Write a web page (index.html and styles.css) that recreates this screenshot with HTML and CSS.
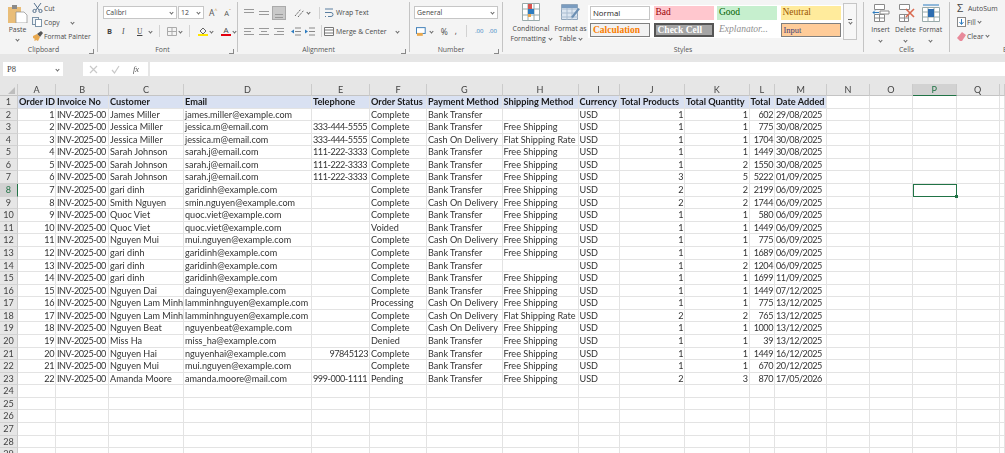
FILE: index.html
```html
<!DOCTYPE html>
<html lang="en">
<head>
    <meta charset="UTF-8">
    <title>Orders - Excel</title>
    <link rel="stylesheet" href="styles.css">
</head>
<body>
<div class="app">

    <!-- ribbon -->
    <div class="ribbon">
        <div class="group clipboard">
            <div class="group-body">
                <div class="big-btn paste">
                    <svg width="20" height="18" viewBox="0 0 20 18"><rect x="0" y="2" width="13" height="16" fill="#e9bd78"/><rect x="4" y="0" width="5" height="4" fill="#8a8a8a"/><path d="M8 7h8l3 3v8H8z" fill="#fff" stroke="#8a8a8a" stroke-width=".7"/></svg>
                    <span>Paste</span>
                    <i class="arr"></i>
                </div>
                <div class="small-col">
                    <div class="small-btn"><svg width="11" height="10" viewBox="0 0 11 10"><path d="M2 0l5 7M9 0L4 7" stroke="#55708c" fill="none"/><circle cx="2.5" cy="8" r="1.6" fill="none" stroke="#55708c"/><circle cx="8.5" cy="8" r="1.6" fill="none" stroke="#55708c"/></svg><span>Cut</span></div>
                    <div class="small-btn"><svg width="11" height="10" viewBox="0 0 11 10"><rect x=".5" y=".5" width="6" height="7" fill="#eef2f6" stroke="#7c93a8"/><rect x="3.5" y="2.5" width="6" height="7" fill="#fff" stroke="#7c93a8"/></svg><span>Copy</span><i class="arr copy-arr"></i></div>
                    <div class="small-btn"><svg width="11" height="10" viewBox="0 0 11 10"><path d="M5 3l4-3 2 2-3 4z" fill="#555"/><path d="M1 5l4-2 3 3-2 4-2-1-1 1-1-1 1-1-2-1z" fill="#e9a94f"/></svg><span>Format Painter</span></div>
                </div>
            </div>
            <div class="group-label">Clipboard<i class="launcher"></i></div>
        </div>

        <div class="group font">
            <div class="group-body rows">
                <div class="row">
                    <div class="select font-name">Calibri<i class="arr"></i></div>
                    <div class="select font-size">12<i class="arr"></i></div>
                    <span class="grow-a">A<sup>^</sup></span>
                    <span class="shrink-a">A<sup>ˇ</sup></span>
                </div>
                <div class="row fmt-row">
                    <b class="fmt fmt-b">B</b><em class="fmt">I</em><u class="fmt fmt-u">U</u><i class="arr"></i>
                    <i class="vsep"></i>
                    <svg width="10" height="9" viewBox="0 0 10 9"><path d="M.5.5h9v8h-9zM5 0v9M0 4.5h10" fill="none" stroke="#aaa"/></svg><i class="arr"></i>
                    <i class="vsep"></i>
                    <span class="color-btn"><svg width="9" height="7" viewBox="0 0 9 7"><path d="M1 4l3-3 3 3-3 3z" fill="none" stroke="#666"/></svg><i class="bar yellow"></i></span><i class="arr"></i>
                    <span class="color-btn text-a">A<i class="bar red"></i></span><i class="arr"></i>
                </div>
            </div>
            <div class="group-label">Font<i class="launcher"></i></div>
        </div>

        <div class="group alignment">
            <div class="group-body rows">
                <div class="row">
                    <span class="lines top"><i></i><i></i></span>
                    <span class="lines middle"><i></i><i></i></span>
                    <span class="lines bottom active"><i></i><i></i></span>
                    <svg class="orient" width="11" height="10" viewBox="0 0 11 10"><path d="M1 8l6-7M4 9l6-7" stroke="#666" stroke-dasharray="2 1" fill="none"/></svg><i class="arr"></i>
                    <i class="vsep"></i>
                    <svg class="wrap-ico" width="10" height="10" viewBox="0 0 10 10"><path d="M1 1h8M1 4.500h6a2 2 0 0 1 0 4H4M1 8.500h1" stroke="#5b7fa0" fill="none"/></svg>
                    <span class="cmd">Wrap Text</span>
                </div>
                <div class="row">
                    <span class="lines h-left"><i></i><i></i><i></i></span>
                    <span class="lines h-center"><i></i><i></i><i></i></span>
                    <span class="lines h-right"><i></i><i></i><i></i></span>
                    <svg class="indent" width="10" height="9" viewBox="0 0 10 9"><path d="M4 1h6M4 4.500h6M4 8h6" stroke="#888"/><path d="M3 2.500L0 4.500l3 2z" fill="#2d7cc0"/></svg>
                    <svg class="indent" width="10" height="9" viewBox="0 0 10 9"><path d="M4 1h6M4 4.500h6M4 8h6" stroke="#888"/><path d="M0 2.500l3 2-3 2z" fill="#2d7cc0"/></svg>
                    <i class="vsep"></i>
                    <svg class="wrap-ico" width="10" height="9" viewBox="0 0 10 9"><path d="M.5.500h9v8h-9zM0 3h10M0 6h10" fill="#fff" stroke="#777"/></svg>
                    <span class="cmd">Merge &amp; Center</span><i class="arr merge-arr"></i>
                </div>
            </div>
            <div class="group-label">Alignment<i class="launcher"></i></div>
        </div>

        <div class="group number">
            <div class="group-body rows">
                <div class="row">
                    <div class="select number-format">General<i class="arr"></i></div>
                </div>
                <div class="row num-row">
                    <svg width="10" height="9" viewBox="0 0 10 9"><rect x=".5" y=".5" width="9" height="6" fill="#fff" stroke="#3f7fb8"/><rect x="1" y="6" width="6" height="3" fill="#e9a94f"/></svg><i class="arr"></i>
                    <span class="pct">%</span>
                    <span class="comma">,</span>
                    <i class="vsep"></i>
                    <span class="dec">.00</span>
                    <span class="dec">.00</span>
                </div>
            </div>
            <div class="group-label">Number<i class="launcher"></i></div>
        </div>

        <div class="group styles-group">
            <div class="group-body">
                <div class="big-btn cond">
                    <svg width="18" height="18" viewBox="0 0 18 18"><path d="M.5.500h17v17H.5zM6 0v18M12 0v18M0 6h18M0 12h18" fill="#fff" stroke="#9aa"/><rect x="6" y="1" width="4" height="5" fill="#d9534f"/><rect x="6" y="6" width="6" height="5" fill="#2d7cc0"/><rect x="6" y="11" width="3" height="3" fill="#e9a94f"/></svg>
                    <span>Conditional<br>Formatting <i class="arr inline"></i></span>
                </div>
                <div class="big-btn as-table">
                    <svg width="19" height="18" viewBox="0 0 19 18"><path d="M.5 1.500h16v15H.5z" fill="#dce6f1" stroke="#8fa5bb"/><path d="M0 6h17M0 10h17M0 14h17M6 2v15M11 2v15" stroke="#a9bcd0"/><rect x="1" y="2" width="15" height="3" fill="#7a9cc0"/><path d="M10 14l7-9 2 1-7 9z" fill="#6b8fb3"/></svg>
                    <span>Format as<br>Table <i class="arr inline"></i></span>
                </div>
                <div class="gallery">
                    <div class="style-grid">
                        <div class="style s-normal">Normal</div>
                        <div class="style s-bad">Bad</div>
                        <div class="style s-good">Good</div>
                        <div class="style s-neutral">Neutral</div>
                        <div class="style s-calc">Calculation</div>
                        <div class="style s-check">Check Cell</div>
                        <div class="style s-expl">Explanator...</div>
                        <div class="style s-input">Input</div>
                    </div>
                    <div class="gallery-more"><i></i><i class="arr"></i></div>
                </div>
            </div>
            <div class="group-label">Styles</div>
        </div>

        <div class="group cells">
            <div class="group-body">
                <div class="cell-btn">
                    <svg width="18" height="18" viewBox="0 0 18 18"><path d="M2.500.500h10v5h-10zM2.500 10.500h10v7h-10zM7.500 10v8M2 14h11M8 7h9v3H8z" fill="#fff" stroke="#8a8a8a"/><path d="M7 8.500H1M3 6.500l-2 2 2 2" fill="none" stroke="#2d7cc0"/></svg>
                    <span>Insert</span><i class="arr"></i>
                </div>
                <div class="cell-btn">
                    <svg width="18" height="18" viewBox="0 0 18 18"><path d="M2.500.500h10v5h-10zM2.500 10.500h9v7h-9zM7.500 10v8M2 14h10" fill="#fff" stroke="#8a8a8a"/><path d="M9 5l8 8M17 5l-8 8" stroke="#d9694f" stroke-width="1.600"/></svg>
                    <span>Delete</span><i class="arr"></i>
                </div>
                <div class="cell-btn">
                    <svg width="18" height="18" viewBox="0 0 18 18"><path d="M.5 3.500h17v14H.5zM6 3v15M12 3v15M0 8h18M0 13h18" fill="#fff" stroke="#9aa"/><rect x="6" y="5" width="6" height="8" fill="#2d6db0"/><path d="M1 1h16" stroke="#2d7cc0"/></svg>
                    <span>Format</span><i class="arr"></i>
                </div>
            </div>
            <div class="group-label">Cells</div>
        </div>

        <div class="group editing">
            <div class="group-body">
                <div class="small-col">
                    <div class="small-btn"><span class="sigma">Σ</span><span>AutoSum</span></div>
                    <div class="small-btn"><svg width="9" height="10" viewBox="0 0 9 10"><rect x=".5" y=".5" width="8" height="9" fill="#fff" stroke="#888"/><path d="M4.500 2v5M2.500 5l2 2.500 2-2.500" stroke="#2d7cc0" fill="none"/></svg><span>Fill</span><i class="arr inline"></i></div>
                    <div class="small-btn"><svg width="9" height="9" viewBox="0 0 9 9"><path d="M0 6l5-6 4 3-4 6H3z" fill="#e88a9a"/></svg><span>Clear</span><i class="arr inline"></i></div>
                </div>
            </div>
            <div class="group-label">Editing</div>
        </div>
    </div>

    <!-- formula bar -->
    <div class="formula-bar">
        <div class="name-box">P8<i class="arr"></i></div>
        <div class="grip"></div>
        <div class="fx-box">
            <svg width="9" height="9" viewBox="0 0 9 9"><path d="M1 1l7 7M8 1L1 8" stroke="#c9c9c9" stroke-width="1.200"/></svg>
            <svg width="9" height="9" viewBox="0 0 9 9"><path d="M1 5l2.500 3L8 1" stroke="#c9c9c9" stroke-width="1.200" fill="none"/></svg>
            <em>fx</em>
        </div>
        <div class="formula-input"></div>
    </div>

    <!-- sheet -->
    <div class="sheet">
        <span class="corner"><i></i></span><span class="col">A</span><span class="col">B</span><span class="col">C</span><span class="col">D</span><span class="col">E</span><span class="col">F</span><span class="col">G</span><span class="col">H</span><span class="col">I</span><span class="col">J</span><span class="col">K</span><span class="col">L</span><span class="col">M</span><span class="col">N</span><span class="col">O</span><span class="col col-on">P</span><span class="col">Q</span><span class="col"></span>

        <span class="rowh">1</span><span class="hd">Order ID</span><span class="hd">Invoice No</span><span class="hd">Customer</span><span class="hd">Email</span><span class="hd">Telephone</span><span class="hd">Order Status</span><span class="hd">Payment Method</span><span class="hd">Shipping Method</span><span class="hd">Currency</span><span class="hd">Total Products</span><span class="hd">Total Quantity</span><span class="hd">Total</span><span class="hd">Date Added</span><span></span><span></span><span></span><span></span><span></span>

        <span class="rowh">2</span><span class="n">1</span><span>INV-2025-00</span><span>James Miller</span><span>james.miller@example.com</span><span></span><span>Complete</span><span>Bank Transfer</span><span></span><span>USD</span><span class="n">1</span><span class="n">1</span><span class="n">602</span><span>29/08/2025</span><span></span><span></span><span></span><span></span><span></span>
        <span class="rowh">3</span><span class="n">2</span><span>INV-2025-00</span><span>Jessica Miller</span><span>jessica.m@email.com</span><span>333-444-5555</span><span>Complete</span><span>Bank Transfer</span><span>Free Shipping</span><span>USD</span><span class="n">1</span><span class="n">1</span><span class="n">775</span><span>30/08/2025</span><span></span><span></span><span></span><span></span><span></span>
        <span class="rowh">4</span><span class="n">3</span><span>INV-2025-00</span><span>Jessica Miller</span><span>jessica.m@email.com</span><span>333-444-5555</span><span>Complete</span><span>Cash On Delivery</span><span>Flat Shipping Rate</span><span>USD</span><span class="n">1</span><span class="n">1</span><span class="n">1704</span><span>30/08/2025</span><span></span><span></span><span></span><span></span><span></span>
        <span class="rowh">5</span><span class="n">4</span><span>INV-2025-00</span><span>Sarah Johnson</span><span>sarah.j@email.com</span><span>111-222-3333</span><span>Complete</span><span>Bank Transfer</span><span>Free Shipping</span><span>USD</span><span class="n">1</span><span class="n">1</span><span class="n">1449</span><span>30/08/2025</span><span></span><span></span><span></span><span></span><span></span>
        <span class="rowh">6</span><span class="n">5</span><span>INV-2025-00</span><span>Sarah Johnson</span><span>sarah.j@email.com</span><span>111-222-3333</span><span>Complete</span><span>Bank Transfer</span><span>Free Shipping</span><span>USD</span><span class="n">1</span><span class="n">2</span><span class="n">1550</span><span>30/08/2025</span><span></span><span></span><span></span><span></span><span></span>
        <span class="rowh">7</span><span class="n">6</span><span>INV-2025-00</span><span>Sarah Johnson</span><span>sarah.j@email.com</span><span>111-222-3333</span><span>Complete</span><span>Bank Transfer</span><span>Free Shipping</span><span>USD</span><span class="n">3</span><span class="n">5</span><span class="n">5222</span><span>01/09/2025</span><span></span><span></span><span></span><span></span><span></span>
        <span class="rowh row-on">8</span><span class="n">7</span><span>INV-2025-00</span><span>gari dinh</span><span>garidinh@example.com</span><span></span><span>Complete</span><span>Bank Transfer</span><span>Free Shipping</span><span>USD</span><span class="n">2</span><span class="n">2</span><span class="n">2199</span><span>06/09/2025</span><span></span><span></span><span class="selected"></span><span></span><span></span>
        <span class="rowh">9</span><span class="n">8</span><span>INV-2025-00</span><span>Smith Nguyen</span><span>smin.nguyen@example.com</span><span></span><span>Complete</span><span>Cash On Delivery</span><span>Free Shipping</span><span>USD</span><span class="n">2</span><span class="n">2</span><span class="n">1744</span><span>06/09/2025</span><span></span><span></span><span></span><span></span><span></span>
        <span class="rowh">10</span><span class="n">9</span><span>INV-2025-00</span><span>Quoc Viet</span><span>quoc.viet@example.com</span><span></span><span>Complete</span><span>Bank Transfer</span><span>Free Shipping</span><span>USD</span><span class="n">1</span><span class="n">1</span><span class="n">580</span><span>06/09/2025</span><span></span><span></span><span></span><span></span><span></span>
        <span class="rowh">11</span><span class="n">10</span><span>INV-2025-00</span><span>Quoc Viet</span><span>quoc.viet@example.com</span><span></span><span>Voided</span><span>Bank Transfer</span><span>Free Shipping</span><span>USD</span><span class="n">1</span><span class="n">1</span><span class="n">1449</span><span>06/09/2025</span><span></span><span></span><span></span><span></span><span></span>
        <span class="rowh">12</span><span class="n">11</span><span>INV-2025-00</span><span>Nguyen Mui</span><span>mui.nguyen@example.com</span><span></span><span>Complete</span><span>Cash On Delivery</span><span>Free Shipping</span><span>USD</span><span class="n">1</span><span class="n">1</span><span class="n">775</span><span>06/09/2025</span><span></span><span></span><span></span><span></span><span></span>
        <span class="rowh">13</span><span class="n">12</span><span>INV-2025-00</span><span>gari dinh</span><span>garidinh@example.com</span><span></span><span>Complete</span><span>Bank Transfer</span><span>Free Shipping</span><span>USD</span><span class="n">1</span><span class="n">1</span><span class="n">1689</span><span>06/09/2025</span><span></span><span></span><span></span><span></span><span></span>
        <span class="rowh">14</span><span class="n">13</span><span>INV-2025-00</span><span>gari dinh</span><span>garidinh@example.com</span><span></span><span>Complete</span><span>Bank Transfer</span><span></span><span>USD</span><span class="n">1</span><span class="n">2</span><span class="n">1204</span><span>06/09/2025</span><span></span><span></span><span></span><span></span><span></span>
        <span class="rowh">15</span><span class="n">14</span><span>INV-2025-00</span><span>gari dinh</span><span>garidinh@example.com</span><span></span><span>Complete</span><span>Bank Transfer</span><span>Free Shipping</span><span>USD</span><span class="n">1</span><span class="n">1</span><span class="n">1699</span><span>11/09/2025</span><span></span><span></span><span></span><span></span><span></span>
        <span class="rowh">16</span><span class="n">15</span><span>INV-2025-00</span><span>Nguyen Dai</span><span>dainguyen@example.com</span><span></span><span>Complete</span><span>Bank Transfer</span><span>Free Shipping</span><span>USD</span><span class="n">1</span><span class="n">1</span><span class="n">1449</span><span>07/12/2025</span><span></span><span></span><span></span><span></span><span></span>
        <span class="rowh">17</span><span class="n">16</span><span>INV-2025-00</span><span>Nguyen Lam Minh</span><span>lamminhnguyen@example.com</span><span></span><span>Processing</span><span>Cash On Delivery</span><span>Free Shipping</span><span>USD</span><span class="n">1</span><span class="n">1</span><span class="n">775</span><span>13/12/2025</span><span></span><span></span><span></span><span></span><span></span>
        <span class="rowh">18</span><span class="n">17</span><span>INV-2025-00</span><span>Nguyen Lam Minh</span><span>lamminhnguyen@example.com</span><span></span><span>Complete</span><span>Cash On Delivery</span><span>Flat Shipping Rate</span><span>USD</span><span class="n">2</span><span class="n">2</span><span class="n">765</span><span>13/12/2025</span><span></span><span></span><span></span><span></span><span></span>
        <span class="rowh">19</span><span class="n">18</span><span>INV-2025-00</span><span>Nguyen Beat</span><span>nguyenbeat@example.com</span><span></span><span>Complete</span><span>Cash On Delivery</span><span>Free Shipping</span><span>USD</span><span class="n">1</span><span class="n">1</span><span class="n">1000</span><span>13/12/2025</span><span></span><span></span><span></span><span></span><span></span>
        <span class="rowh">20</span><span class="n">19</span><span>INV-2025-00</span><span>Miss Ha</span><span>miss_ha@example.com</span><span></span><span>Denied</span><span>Bank Transfer</span><span>Free Shipping</span><span>USD</span><span class="n">1</span><span class="n">1</span><span class="n">39</span><span>13/12/2025</span><span></span><span></span><span></span><span></span><span></span>
        <span class="rowh">21</span><span class="n">20</span><span>INV-2025-00</span><span>Nguyen Hai</span><span>nguyenhai@example.com</span><span class="n">97845123</span><span>Complete</span><span>Bank Transfer</span><span>Free Shipping</span><span>USD</span><span class="n">1</span><span class="n">1</span><span class="n">1449</span><span>16/12/2025</span><span></span><span></span><span></span><span></span><span></span>
        <span class="rowh">22</span><span class="n">21</span><span>INV-2025-00</span><span>Nguyen Mui</span><span>mui.nguyen@example.com</span><span></span><span>Complete</span><span>Bank Transfer</span><span>Free Shipping</span><span>USD</span><span class="n">1</span><span class="n">1</span><span class="n">670</span><span>20/12/2025</span><span></span><span></span><span></span><span></span><span></span>
        <span class="rowh">23</span><span class="n">22</span><span>INV-2025-00</span><span>Amanda Moore</span><span>amanda.moore@mail.com</span><span>999-000-1111</span><span>Pending</span><span>Bank Transfer</span><span>Free Shipping</span><span>USD</span><span class="n">2</span><span class="n">3</span><span class="n">870</span><span>17/05/2026</span><span></span><span></span><span></span><span></span><span></span>

        <span class="rowh">24</span><span></span><span></span><span></span><span></span><span></span><span></span><span></span><span></span><span></span><span></span><span></span><span></span><span></span><span></span><span></span><span></span><span></span><span></span>
        <span class="rowh">25</span><span></span><span></span><span></span><span></span><span></span><span></span><span></span><span></span><span></span><span></span><span></span><span></span><span></span><span></span><span></span><span></span><span></span><span></span>
        <span class="rowh">26</span><span></span><span></span><span></span><span></span><span></span><span></span><span></span><span></span><span></span><span></span><span></span><span></span><span></span><span></span><span></span><span></span><span></span><span></span>
        <span class="rowh">27</span><span></span><span></span><span></span><span></span><span></span><span></span><span></span><span></span><span></span><span></span><span></span><span></span><span></span><span></span><span></span><span></span><span></span><span></span>
        <span class="rowh">28</span><span></span><span></span><span></span><span></span><span></span><span></span><span></span><span></span><span></span><span></span><span></span><span></span><span></span><span></span><span></span><span></span><span></span><span></span>
        <span class="rowh">29</span><span></span><span></span><span></span><span></span><span></span><span></span><span></span><span></span><span></span><span></span><span></span><span></span><span></span><span></span><span></span><span></span><span></span><span></span>
    </div>
</div>
</body>
</html>
```

FILE: styles.css
```css
html, body {
    margin: 0;
    height: 453px;
    overflow: hidden;
    background: #fff;
}
.app {
    width: 1005px;
    height: 453px;
    overflow: hidden;
    font-family: "Open Sans", "Noto Sans", sans-serif;
    font-size: 6.9px;
    color: #4a4a4a;
    filter: blur(0.4px);
}
i { font-style: normal; }

/* ---- ribbon ---- */
.ribbon {
    display: flex;
    height: 54px;
    background: #f4f4f4;
    width: 1140px;
    box-sizing: border-box;
    padding-top: 2px;
}
.group {
    position: relative;
    display: flex;
    flex-direction: column;
    height: 50px;
    box-sizing: border-box;
    border-right: 1px solid #c4c4c4;
}
.group-body { flex: 1; display: flex; min-height: 0; }
.group-body.rows { flex-direction: column; }
.group-label {
    height: 11px;
    line-height: 11px;
    margin-bottom: -3px;
    text-align: center;
    color: #555;
}
.group-label:has(.launcher) { padding-right: 10px; }
.launcher {
    position: absolute;
    right: 3px;
    bottom: -2px;
    width: 4px;
    height: 4px;
    border-right: 1px solid #888;
    border-bottom: 1px solid #888;
}
.clipboard { width: 98px; }
.font { width: 140px; }
.alignment { width: 172px; }
.number { width: 93px; }
.styles-group { width: 361px; }
.cells { width: 86px; }
.editing { width: 128px; border-right: none; }

.arr {
    display: inline-block;
    width: 2px;
    height: 2px;
    border-right: 1px solid #666;
    border-bottom: 1px solid #666;
    transform: rotate(45deg);
    flex: none;
}
.arr.inline { margin: 0 0 1px 1px; }

.big-btn {
    display: flex;
    flex-direction: column;
    align-items: center;
    text-align: center;
    line-height: 9.5px;
    flex: none;
}
.big-btn span { margin-top: 3px; }
.paste { width: 29px; margin-left: 3px; padding-top: 3px; }
.paste span { margin-top: 2px; }
.paste .arr { margin-top: 3px; }
.small-col { display: flex; flex-direction: column; gap: 4px; padding-top: 1px; }
.small-btn { display: flex; align-items: center; gap: 1px; height: 10px; white-space: nowrap; }
.clipboard .small-btn { font-size: 6.700px; }
.copy-arr { margin-left: 10px; }

.rows .row { display: flex; align-items: center; height: 13px; margin-top: 4px; }
.rows .row + .row { margin-top: 5px; height: 14px; }
.select {
    display: flex;
    align-items: center;
    justify-content: space-between;
    box-sizing: border-box;
    height: 13px;
    padding: 0 3px 0 2px;
    background: #fff;
    border: 1px solid #c6c6c6;
    color: #444;
}
.font-name { width: 74px; margin-left: 5px; }
.font-size { width: 26px; margin-left: 1px; }
.grow-a, .shrink-a { font-size: 8.5px; color: #555; }
.grow-a { margin-left: 5px; }
.shrink-a { margin-left: 7px; font-size: 7.5px; }
sup { font-size: 5px; color: #c88a2c; line-height: 0; }

.fmt-row { padding-left: 9px; }
.fmt { width: 15px; font-size: 7.5px; font-family: "Liberation Serif", serif; color: #444; }
.fmt-b { font-family: "Open Sans", sans-serif; }
.fmt-u { width: 10px; }
.vsep { width: 1px; height: 12px; background: #d2d2d2; margin: 0 7px; flex: none; }
.fmt-row .arr { margin-left: 2px; }
.color-btn { display: inline-flex; flex-direction: column; align-items: center; width: 10px; margin-left: 1px; line-height: 8px; }
.text-a { margin-left: 8px; font-size: 8px; color: #444; }
.bar { display: block; width: 10px; height: 2px; margin-top: 0; }
.yellow { background: #ffe600; }
.red { background: #e3000f; }

.lines { display: flex; flex-direction: column; justify-content: center; gap: 2px; box-sizing: border-box; width: 14px; height: 14px; margin-right: 1px; flex: none; padding: 0 2px; }
.lines i { display: block; height: 1px; background: #999; }
.alignment .row { padding-left: 4px; }
.lines.active { background: #c9c9c9; border: 1px solid #aaa; justify-content: flex-end; padding-bottom: 1px; }
.lines.top { justify-content: flex-start; padding-top: 3px; }
.lines.middle { justify-content: center; }
.h-left i:nth-child(2) { width: 7px; }
.h-center i:nth-child(2) { width: 6px; margin: 0 auto; }
.h-right i:nth-child(2) { width: 7px; margin-left: auto; }
.orient { margin: 0 2px 0 7px; }
.indent { margin-left: 4px; }
.alignment .vsep { margin: 0 4px 0 9px; }
.alignment .row + .row .vsep { margin: 0 2px 0 6px; }
.cmd { margin-left: 2px; white-space: nowrap; }
.merge-arr { margin-left: 9px; }

.number-format { width: 84px; margin-left: 4px; }
.num-row { padding-left: 6px; }
.num-row .arr { margin-left: 4px; }
.pct { margin-left: 8px; font-size: 8.5px; }
.comma { margin-left: 7px; font-size: 8.5px; line-height: 6px; }
.num-row .vsep { margin: 0 8px 0 9px; }
.dec { width: 14px; font-size: 6px; color: #2d7cc0; }

.cond { width: 44px; margin-left: 6px; padding-top: 1px; }
.as-table { width: 35px; padding-top: 1px; }
.gallery { display: flex; height: 37px; margin-top: 1px; flex: none; }
.style-grid {
    display: grid;
    grid-template-columns: repeat(4, 60px);
    grid-template-rows: 14px 14px;
    gap: 3px 3.500px;
    align-content: center;
    background: #fff;
    height: 33px;
    margin-top: 2px;
    width: 255px;
    padding-left: 2px;
    box-sizing: border-box;
}
.style {
    box-sizing: border-box;
    line-height: 13px;
    padding-left: 2px;
    font-family: "Liberation Serif", serif;
    font-size: 9.5px;
    white-space: nowrap;
    overflow: hidden;
}
.s-normal { font-family: "Open Sans", sans-serif; font-size: 7.8px; color: #222; background: #fff; border: 1px solid #c6c6c6; }
.s-bad { background: #ffc7ce; color: #9c0006; }
.s-good { background: #c6efce; color: #006100; }
.s-neutral { background: #ffeb9c; color: #9c5700; }
.s-calc { background: #f2f2f2; color: #fa7d00; font-weight: bold; border: 1px solid #7f7f7f; line-height: 12px; }
.s-check { background: #a5a5a5; color: #fff; font-weight: bold; border: 2px solid #555; line-height: 10px; }
.s-expl { color: #8f8f8f; font-style: italic; }
.s-input { background: #ffcc99; color: #3f3f76; border: 1px solid #7f7f7f; line-height: 12px; font-size: 8.5px; }
.gallery-more {
    display: flex;
    flex-direction: column;
    align-items: center;
    justify-content: center;
    gap: 1px;
    width: 14px;
    box-sizing: border-box;
    background: #f7f7f7;
    border: 1px solid #c6c6c6;
    margin-left: 0;
}
.gallery-more > i:first-child { width: 4px; height: 1px; background: #666; }

.cell-btn { display: flex; flex-direction: column; align-items: center; width: 25px; padding-top: 2px; line-height: 9px; }
.cell-btn span { margin-top: 3px; }
.cell-btn .arr { margin-top: 5px; }
.cells .group-body { padding-left: 4px; }
.editing .group-body { padding-left: 7px; }
.sigma { width: 10px; font-size: 11px; line-height: 10px; color: #444; }

/* ---- formula bar ---- */
.formula-bar {
    display: flex;
    align-items: stretch;
    height: 30px;
    box-sizing: border-box;
    padding: 8px 0;
    background: #e6e6e6;
}
.name-box {
    display: flex;
    align-items: center;
    justify-content: space-between;
    box-sizing: border-box;
    width: 60px;
    margin-left: 3px;
    padding: 0 4px;
    background: #fff;
    font-family: "Liberation Serif", serif;
    font-size: 8.5px;
    color: #444;
}
.grip { width: 20px; }
.fx-box {
    display: flex;
    align-items: center;
    gap: 13px;
    box-sizing: border-box;
    width: 65px;
    padding-left: 6px;
    background: #fff;
}
.fx-box em { font-family: "Liberation Serif", serif; font-size: 8.5px; color: #555; }
.formula-input { flex: 1; margin-left: 2px; background: #fff; }

/* ---- sheet ---- */
.sheet {
    display: grid;
    grid-template-columns: 18px 38px 53px 75px 128px 58px 57px 75.500px 76px 41px 65.500px 64.500px 25.500px 52px 43px 43px 43.500px 43.500px 5.300px;
    grid-template-rows: 12px;
    grid-auto-rows: 12.580px;
    font-family: Lato, "Open Sans", sans-serif;
    font-size: 9.100px;
    color: #333;
}
.sheet > span {
    box-sizing: border-box;
    border-right: 1px solid #e3e3e3;
    border-bottom: 1px solid #e3e3e3;
    line-height: 12px;
    padding: 0 1px;
    white-space: nowrap;
    min-width: 0;
}
/* Lato digits run wider than the sheet's font: invoice, phone, date columns and numbers */
.sheet > span:not(.hd):nth-child(19n+3),
.sheet > span:not(.hd):nth-child(19n+6),
.sheet > span:not(.hd):nth-child(19n+14),
.sheet > .n {
    letter-spacing: -0.45px;
}
.sheet > .col {
    background: #e6e6e6;
    border-right: 1px solid #cbcbcb;
    border-bottom: 1px solid #c4c4c4;
    text-align: center;
    line-height: 11px;
    color: #444;
}
.sheet > .col-on {
    background: #d2d2d2;
    border-bottom: 1px solid #217346;
    color: #217346;
}
.sheet > .corner {
    position: relative;
    background: #e6e6e6;
    border-right: 1px solid #cbcbcb;
    border-bottom: 1px solid #c4c4c4;
}
.corner i {
    position: absolute;
    right: 2px;
    bottom: 1px;
    border-left: 7px solid transparent;
    border-bottom: 7px solid #bdbdbd;
}
.sheet > .rowh {
    background: #e6e6e6;
    border-right: 1px solid #cbcbcb;
    border-bottom: 1px solid #d2d2d2;
    text-align: center;
    color: #444;
    padding: 0;
}
.sheet > .row-on {
    background: #d2d2d2;
    border-right: 1px solid #217346;
    color: #217346;
}
.sheet > .hd {
    background: #d9e1f2;
    font-weight: bold;
    font-size: 9.200px;
    color: #1a1a1a;
    overflow: visible;
}
.sheet > .n { text-align: right; }
.sheet > .selected {
    position: relative;
    outline: 1.500px solid #217346;
    outline-offset: -1px;
}
.selected::after {
    content: "";
    position: absolute;
    right: -2px;
    bottom: -2px;
    width: 3px;
    height: 3px;
    background: #217346;
}
```
